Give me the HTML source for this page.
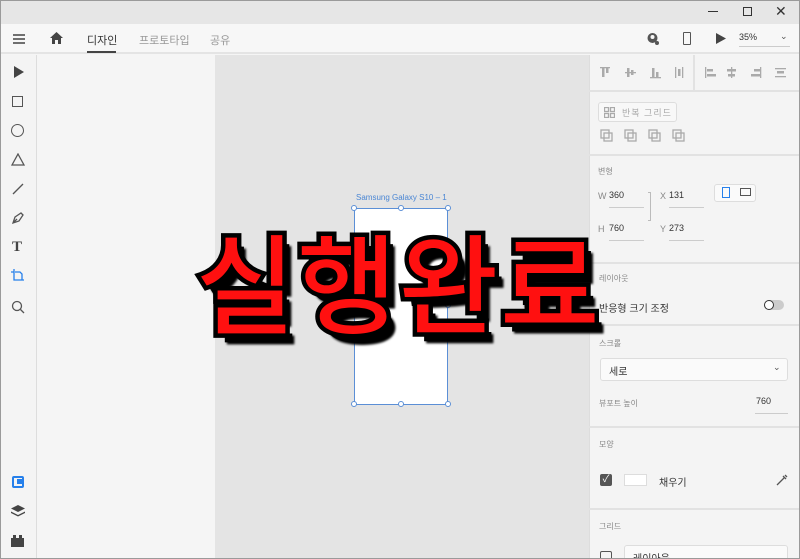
<!DOCTYPE html>
<html><head><meta charset="utf-8"><style>
*{margin:0;padding:0;box-sizing:border-box}
html,body{width:800px;height:559px;overflow:hidden}
body{position:relative;font-family:"Liberation Sans","Noto Sans CJK KR",sans-serif;background:#f5f5f5;color:#333}
.abs{position:absolute}
.t{font-size:9px;color:#666}
.ico{position:absolute;stroke:#555;fill:none;stroke-width:1.3}
</style></head><body>
<div class="abs" style="left:0;top:0;width:800px;height:559px;border:1px solid #9a9a9a;z-index:50;pointer-events:none"></div>
<div class="abs" style="left:0;top:0;width:800px;height:24px;background:#e6e6e6"></div>
<div class="abs" style="left:708px;top:11px;width:10px;height:1px;background:#333"></div>
<div class="abs" style="left:743px;top:7px;width:9px;height:9px;border:1px solid #333"></div>
<div class="abs" style="left:775px;top:3px;font-size:14px;color:#333">✕</div>
<div class="abs" style="left:0;top:24px;width:800px;height:30px;background:#f7f7f7;border-bottom:2px solid #e4e4e4"></div>
<svg class="ico" style="left:12px;top:33px" width="14" height="12"><path d="M1 2H13M1 6H13M1 10H13" stroke="#444" stroke-width="1.5"/></svg>
<svg class="abs" style="left:50px;top:32px" width="13" height="12"><path d="M6.5 0L0 6H2V12H5V8H8V12H11V6H13Z" fill="#444"/></svg>
<div class="abs" style="left:87px;top:32px;font-size:11px;color:#333">디자인</div>
<div class="abs" style="left:87px;top:51px;width:29px;height:2px;background:#444"></div>
<div class="abs" style="left:139px;top:32px;font-size:11px;color:#999">프로토타입</div>
<div class="abs" style="left:210px;top:32px;font-size:11px;color:#999">공유</div>
<svg class="abs" style="left:646px;top:32px" width="14" height="14"><circle cx="6.5" cy="6" r="5" fill="#555"/><circle cx="6.5" cy="5" r="2" fill="#f7f7f7"/><circle cx="11" cy="11" r="2" fill="#555"/></svg>
<div class="abs" style="left:683px;top:32px;width:8px;height:13px;border:1.5px solid #555;border-radius:1px"></div>
<svg class="abs" style="left:716px;top:33px" width="10" height="11"><path d="M0 0L10 5.5L0 11Z" fill="#444"/></svg>
<div class="abs" style="left:739px;top:32px;font-size:9px;color:#333">35%</div>
<div class="abs" style="left:739px;top:46px;width:51px;height:1px;background:#ccc"></div>
<div class="abs" style="left:780px;top:31px;font-size:9px;color:#555">⌄</div>
<div class="abs" style="left:0;top:55px;width:37px;height:504px;background:#f4f4f4;border-right:1px solid #ddd"></div>
<svg class="abs" style="left:14px;top:66px" width="10" height="12"><path d="M0 0L10 6L0 12Z" fill="#444"/></svg>
<div class="abs" style="left:12px;top:96px;width:11px;height:11px;border:1.3px solid #555"></div>
<div class="abs" style="left:11px;top:124px;width:13px;height:13px;border:1.3px solid #555;border-radius:50%"></div>
<svg class="ico" style="left:11px;top:153px" width="14" height="13"><path d="M7 1L13 12H1Z"/></svg>
<svg class="ico" style="left:12px;top:183px" width="12" height="12"><path d="M1 11L11 1"/></svg>
<svg class="ico" style="left:11px;top:211px" width="14" height="14"><path d="M2 12L4 6L10 2L12 4L8 10Z M2 12L6 8"/></svg>
<div class="abs" style="left:12px;top:239px;font-size:15px;font-weight:bold;font-family:'Liberation Serif',serif;color:#444">T</div>
<svg class="ico" style="left:11px;top:269px;stroke:#2680eb" width="14" height="14"><path d="M3 0V11H13M0 3H3M4 3H9L11 5V11"/></svg>
<svg class="ico" style="left:11px;top:300px" width="14" height="14"><circle cx="6" cy="6" r="4.5"/><path d="M9.5 9.5L13 13"/></svg>
<div class="abs" style="left:12px;top:476px;width:12px;height:12px;border:2px solid #2680eb;border-radius:2px"><div style="margin:1px 0 0 3px;width:5px;height:5px;background:#2680eb"></div></div>
<svg class="abs" style="left:11px;top:505px" width="14" height="12"><path d="M7 0L14 3.5L7 7L0 3.5Z M0 6.5L7 10L14 6.5L14 8L7 11.5L0 8Z" fill="#444"/></svg>
<svg class="abs" style="left:11px;top:535px" width="13" height="12"><path d="M0 3H2V0H5V3H8V0H11V3H13V12H0Z" fill="#444"/></svg>
<div class="abs" style="left:37px;top:55px;width:178px;height:504px;background:#f5f5f5"></div>
<div class="abs" style="left:215px;top:55px;width:374px;height:504px;background:#e4e4e4"></div>
<div class="abs" style="left:356px;top:193px;font-size:8px;color:#4a86d4">Samsung Galaxy S10 – 1</div>
<div class="abs" style="left:354px;top:208px;width:94px;height:197px;background:#fff;border:1px solid #5b8fd6"></div>
<div class="abs" style="left:351px;top:205px;width:6px;height:6px;border:1px solid #5b8fd6;border-radius:50%;background:#fff"></div>
<div class="abs" style="left:398px;top:205px;width:6px;height:6px;border:1px solid #5b8fd6;border-radius:50%;background:#fff"></div>
<div class="abs" style="left:445px;top:205px;width:6px;height:6px;border:1px solid #5b8fd6;border-radius:50%;background:#fff"></div>
<div class="abs" style="left:445px;top:302px;width:6px;height:6px;border:1px solid #5b8fd6;border-radius:50%;background:#fff"></div>
<div class="abs" style="left:351px;top:401px;width:6px;height:6px;border:1px solid #5b8fd6;border-radius:50%;background:#fff"></div>
<div class="abs" style="left:398px;top:401px;width:6px;height:6px;border:1px solid #5b8fd6;border-radius:50%;background:#fff"></div>
<div class="abs" style="left:445px;top:401px;width:6px;height:6px;border:1px solid #5b8fd6;border-radius:50%;background:#fff"></div>
<div class="abs" style="left:589px;top:55px;width:211px;height:504px;background:#f4f4f4;border-left:1px solid #ddd"></div>
<div class="abs" style="left:589px;top:90px;width:211px;height:2px;background:#e2e2e2"></div>
<div class="abs" style="left:693px;top:55px;width:2px;height:37px;background:#e2e2e2"></div>
<svg class="abs" style="left:600px;top:66px" width="190" height="14" fill="#aaa"><rect x="0" y="1" width="10" height="1.3"/><rect x="2" y="2" width="2.5" height="9"/><rect x="6" y="2" width="2.5" height="5"/>
<rect x="25" y="6" width="11" height="1.3"/><rect x="27" y="2" width="2.5" height="9"/><rect x="31" y="4" width="2.5" height="5"/>
<rect x="50" y="11" width="11" height="1.3"/><rect x="52" y="2" width="2.5" height="9"/><rect x="56" y="6" width="2.5" height="5"/>
<rect x="75" y="1" width="1.3" height="11"/><rect x="82" y="1" width="1.3" height="11"/><rect x="78" y="3" width="2.5" height="7"/>
<rect x="105" y="1" width="1.3" height="11"/><rect x="107" y="3" width="6" height="2.5"/><rect x="107" y="8" width="9" height="2.5"/>
<rect x="131" y="1" width="1.3" height="11"/><rect x="127" y="3" width="9" height="2.5"/><rect x="128" y="8" width="7" height="2.5"/>
<rect x="160" y="1" width="1.3" height="11"/><rect x="154" y="3" width="6" height="2.5"/><rect x="151" y="8" width="9" height="2.5"/>
<rect x="175" y="2" width="11" height="1.3"/><rect x="175" y="10" width="11" height="1.3"/><rect x="177" y="5" width="7" height="2.5"/></svg>
<div class="abs" style="left:598px;top:102px;width:79px;height:20px;border:1px solid #ddd;border-radius:3px;background:#f8f8f8"></div>
<svg class="ico" style="left:604px;top:107px;stroke:#aaa" width="11" height="11"><rect x="0.5" y="0.5" width="4" height="4"/><rect x="6.5" y="0.5" width="4" height="4"/><rect x="0.5" y="6.5" width="4" height="4"/><rect x="6.5" y="6.5" width="4" height="4"/></svg>
<div class="abs" style="left:622px;top:106px;font-size:9px;color:#aaa;letter-spacing:1px">반복 그리드</div>
<svg class="ico" style="left:600px;top:129px;stroke:#aaa" width="90" height="14"><rect x="1" y="1" width="8" height="8"/><rect x="4" y="4" width="8" height="8"/><rect x="25" y="1" width="8" height="8"/><rect x="28" y="4" width="8" height="8"/><rect x="49" y="1" width="8" height="8"/><rect x="52" y="4" width="8" height="8"/><rect x="73" y="1" width="8" height="8"/><rect x="76" y="4" width="8" height="8"/></svg>
<div class="abs" style="left:589px;top:154px;width:211px;height:2px;background:#e2e2e2"></div>
<div class="abs t" style="left:598px;top:166px;color:#888;font-size:8px">변형</div>
<div class="abs t" style="left:598px;top:191px;color:#888">W</div><div class="abs" style="left:609px;top:190px;font-size:9px">360</div>
<div class="abs" style="left:609px;top:207px;width:35px;height:1px;background:#ccc"></div>
<div class="abs t" style="left:660px;top:191px;color:#888">X</div><div class="abs" style="left:669px;top:190px;font-size:9px">131</div>
<div class="abs" style="left:669px;top:207px;width:35px;height:1px;background:#ccc"></div>
<div class="abs t" style="left:598px;top:224px;color:#888">H</div><div class="abs" style="left:609px;top:223px;font-size:9px">760</div>
<div class="abs" style="left:609px;top:240px;width:35px;height:1px;background:#ccc"></div>
<div class="abs t" style="left:660px;top:224px;color:#888">Y</div><div class="abs" style="left:669px;top:223px;font-size:9px">273</div>
<div class="abs" style="left:669px;top:240px;width:35px;height:1px;background:#ccc"></div>
<div class="abs" style="left:648px;top:192px;width:3px;height:29px;border:1px solid #bbb;border-left:none"></div>
<div class="abs" style="left:714px;top:184px;width:42px;height:18px;border:1px solid #ddd;border-radius:3px;background:#fafafa"></div>
<div class="abs" style="left:722px;top:187px;width:8px;height:11px;border:1.3px solid #2680eb"></div>
<div class="abs" style="left:740px;top:188px;width:11px;height:8px;border:1.3px solid #555"></div>
<div class="abs" style="left:589px;top:262px;width:211px;height:2px;background:#e2e2e2"></div>
<div class="abs" style="left:599px;top:273px;font-size:8px;color:#888">레이아웃</div>
<div class="abs" style="left:599px;top:300px;font-size:10px;color:#333">반응형 크기 조정</div>
<div class="abs" style="left:764px;top:300px;width:20px;height:10px;border-radius:5px;background:#ccc"></div>
<div class="abs" style="left:764px;top:300px;width:10px;height:10px;border-radius:50%;border:1.5px solid #333;background:#fff"></div>
<div class="abs" style="left:589px;top:324px;width:211px;height:2px;background:#e2e2e2"></div>
<div class="abs" style="left:599px;top:338px;font-size:8px;color:#888">스크롤</div>
<div class="abs" style="left:600px;top:358px;width:188px;height:23px;border:1px solid #ddd;border-radius:3px;background:#fafafa"></div>
<div class="abs" style="left:609px;top:363px;font-size:10px">세로</div>
<div class="abs" style="left:773px;top:362px;font-size:9px;color:#555">⌄</div>
<div class="abs" style="left:599px;top:398px;font-size:8px;color:#888">뷰포트 높이</div>
<div class="abs" style="left:756px;top:396px;font-size:9px">760</div>
<div class="abs" style="left:755px;top:413px;width:33px;height:1px;background:#ccc"></div>
<div class="abs" style="left:589px;top:426px;width:211px;height:2px;background:#e2e2e2"></div>
<div class="abs" style="left:599px;top:439px;font-size:8px;color:#888">모양</div>
<div class="abs" style="left:600px;top:474px;width:12px;height:12px;background:#555;border-radius:2px;color:#fff;font-size:10px;line-height:12px;text-align:center">✓</div>
<div class="abs" style="left:624px;top:474px;width:23px;height:12px;border:1px solid #ddd;background:#fff"></div>
<div class="abs" style="left:659px;top:474px;font-size:10px">채우기</div>
<svg class="ico" style="left:776px;top:474px" width="12" height="12"><path d="M1 11L8 4M7 2L10 5M9 1L11 3"/></svg>
<div class="abs" style="left:589px;top:508px;width:211px;height:2px;background:#e2e2e2"></div>
<div class="abs" style="left:599px;top:521px;font-size:8px;color:#888">그리드</div>
<div class="abs" style="left:600px;top:551px;width:12px;height:12px;border:1.5px solid #555;border-radius:2px"></div>
<div class="abs" style="left:624px;top:545px;width:164px;height:23px;border:1px solid #ddd;border-radius:3px;background:#fafafa;font-size:10px;padding:4px 8px">레이아웃</div>
<div class="abs" style="left:196px;top:214px;z-index:40;font-family:'Noto Sans CJK KR',sans-serif;font-weight:500;font-size:108px;line-height:130px;color:#ff1010;-webkit-text-stroke:9px #000;paint-order:stroke fill;letter-spacing:2px;text-shadow:7px 9px 0 #000,9px 11px 2px #000;white-space:nowrap">실행완료</div>
</body></html>
